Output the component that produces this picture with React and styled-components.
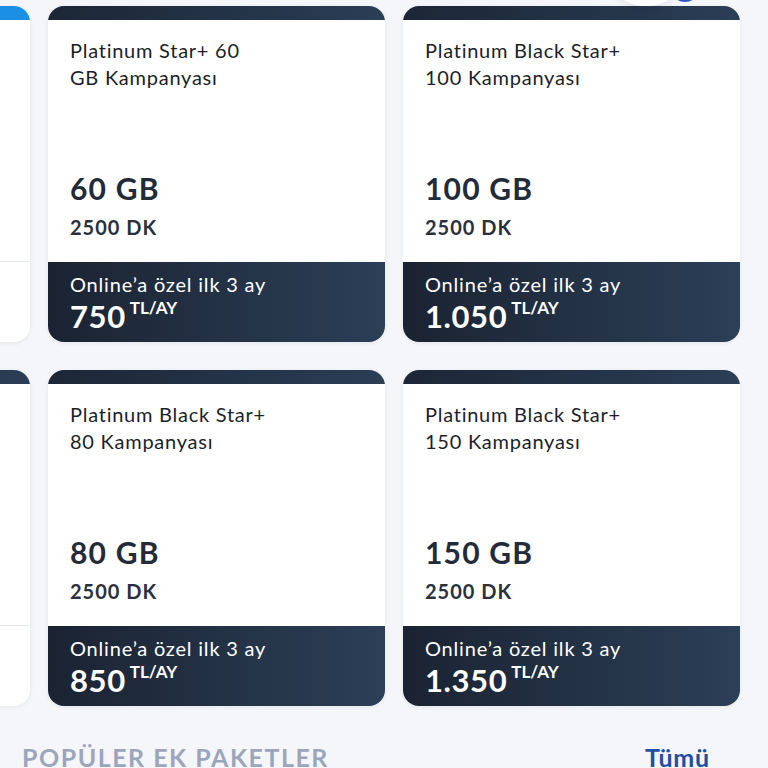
import styled, { createGlobalStyle } from 'styled-components';

const GlobalStyle = createGlobalStyle`
  html, body {
    margin: 0;
    padding: 0;
    background: #f4f6f9;
    overflow: hidden;
  }
  body {
    font-family: 'Lato', 'Noto Sans', sans-serif;
  }
`;

const packages = [
  [
    { partial: true, accent: 'blue' },
    { title: ['Platinum Star+ 60', 'GB Kampanyası'], gb: '60 GB', dk: '2500 DK', price: '750' },
    { title: ['Platinum Black Star+', '100 Kampanyası'], gb: '100 GB', dk: '2500 DK', price: '1.050' },
  ],
  [
    { partial: true, accent: 'dark' },
    { title: ['Platinum Black Star+', '80 Kampanyası'], gb: '80 GB', dk: '2500 DK', price: '850' },
    { title: ['Platinum Black Star+', '150 Kampanyası'], gb: '150 GB', dk: '2500 DK', price: '1.350' },
  ],
];

function App() {
  return (
    <Page>
      <GlobalStyle />
      <FloatingBlob>
        <FloatingDot />
      </FloatingBlob>
      <Grid>
        {packages.flat().map((p, i) =>
          p.partial ? (
            <Card key={i}>
              <Strip $accent={p.accent} />
              <Body />
              <EmptyFooter />
            </Card>
          ) : (
            <Card key={i}>
              <Strip $accent="dark" />
              <Body>
                <Title>
                  {p.title.map((line) => (
                    <TitleLine key={line}>{line}</TitleLine>
                  ))}
                </Title>
                <Spacer />
                <Gb>{p.gb}</Gb>
                <Dk>{p.dk}</Dk>
              </Body>
              <Footer>
                <Offer>Online’a özel ilk 3 ay</Offer>
                <PriceRow>
                  <Price>{p.price}</Price>
                  <Unit>TL/AY</Unit>
                </PriceRow>
              </Footer>
            </Card>
          )
        )}
      </Grid>
      <SectionHead>
        <SectionTitle>POPÜLER EK PAKETLER</SectionTitle>
        <SeeAll>Tümü</SeeAll>
      </SectionHead>
    </Page>
  );
}

export default App;

const Page = styled.div`
  position: relative;
  width: 768px;
  height: 768px;
  overflow: hidden;
  padding-top: 6px;
  box-sizing: border-box;
`;

const FloatingBlob = styled.div`
  position: absolute;
  top: -40px;
  left: 600px;
  width: 92px;
  height: 46px;
  border-radius: 0 0 46px 46px;
  background: #ffffff;
  box-shadow: 0 2px 6px rgba(20, 30, 50, 0.08);
  z-index: 2;
`;

const FloatingDot = styled.div`
  position: absolute;
  right: -8px;
  bottom: 4px;
  width: 30px;
  height: 30px;
  border-radius: 50%;
  background: #2a55c9;
`;

const Grid = styled.div`
  display: grid;
  grid-template-columns: repeat(3, 337px);
  column-gap: 18px;
  row-gap: 28px;
  margin-left: -307px;
`;

const Card = styled.div`
  display: flex;
  flex-direction: column;
  height: 336px;
  border-radius: 16px;
  background: #ffffff;
  box-shadow: 0 1px 4px rgba(30, 40, 60, 0.08);
  overflow: hidden;
`;

const Strip = styled.div`
  height: 14px;
  flex: none;
  background: ${(p) =>
    p.$accent === 'blue'
      ? '#1a8fe3'
      : 'linear-gradient(90deg, #1c2636 0%, #2a3e56 100%)'};
`;

const Body = styled.div`
  flex: 1;
  display: flex;
  flex-direction: column;
  padding: 17px 22px 22px;
`;

const Title = styled.div`
  font-size: 20px;
  line-height: 27px;
  letter-spacing: 0.75px;
  color: #1b1f28;
`;

const TitleLine = styled.div`
  white-space: nowrap;
`;

const Spacer = styled.div`
  flex: 1;
`;

const Gb = styled.div`
  font-size: 30px;
  font-weight: 700;
  letter-spacing: 1.2px;
  color: #232b38;
  line-height: 36px;
`;

const Dk = styled.div`
  font-size: 20px;
  font-weight: 700;
  letter-spacing: 1px;
  color: #2a313c;
  margin-top: 8px;
  line-height: 26px;
`;

const EmptyFooter = styled.div`
  height: 80px;
  flex: none;
  border-top: 1px solid #e4e7ec;
`;

const Footer = styled.div`
  height: 80px;
  flex: none;
  box-sizing: border-box;
  padding: 9px 22px 0;
  background: linear-gradient(90deg, #1b2332 0%, #2b3f57 100%);
  color: #ffffff;
`;

const Offer = styled.div`
  font-size: 20px;
  line-height: 26px;
  letter-spacing: 0.8px;
`;

const PriceRow = styled.div`
  display: flex;
  align-items: flex-start;
  gap: 4px;
`;

const Price = styled.span`
  font-size: 31px;
  font-weight: 700;
  letter-spacing: 0.6px;
  line-height: 38px;
`;

const Unit = styled.span`
  font-size: 17px;
  font-weight: 700;
  line-height: 20px;
  margin-top: 1px;
`;

const SectionHead = styled.div`
  display: flex;
  justify-content: space-between;
  align-items: baseline;
  padding: 36px 58px 0 22px;
`;

const SectionTitle = styled.div`
  font-size: 25px;
  font-weight: 700;
  letter-spacing: 1.5px;
  color: #9ca5ba;
`;

const SeeAll = styled.div`
  font-size: 25px;
  font-weight: 700;
  letter-spacing: 0.8px;
  color: #1f4fa3;
`;
